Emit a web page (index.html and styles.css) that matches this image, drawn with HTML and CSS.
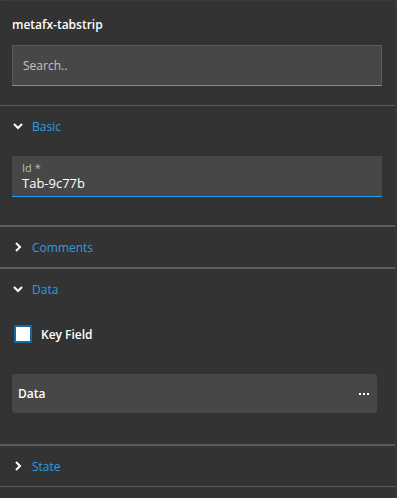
FILE: index.html
```html
<!DOCTYPE html>
<html lang="en">
    <head>
        <meta charset="UTF-8" />
        <title>metafx-tabstrip</title>
        <link rel="stylesheet" href="styles.css">
    </head>
    <body>
        <div class="panel">
            <div class="top">
                <h1 class="title">metafx-tabstrip</h1>
                <div class="search">
                    <input type="text" placeholder="Search.." />
                </div>
            </div>

            <div class="section">
                <div class="sectionHead">
                    <svg class="chevron" width="10" height="10" viewBox="0 0 10 10"><path d="M1 3 L5 7 L9 3" fill="none" stroke="#fff" stroke-width="2"/></svg>
                    <span>Basic</span>
                </div>
                <div class="sectionBody basicBody">
                    <div class="field">
                        <div class="fieldLabel">Id *</div>
                        <div class="fieldValue">Tab-9c77b</div>
                    </div>
                </div>
            </div>

            <div class="section">
                <div class="sectionHead">
                    <svg class="chevron" width="10" height="10" viewBox="0 0 10 10"><path d="M3 1 L7 5 L3 9" fill="none" stroke="#fff" stroke-width="2"/></svg>
                    <span>Comments</span>
                </div>
            </div>

            <div class="section">
                <div class="sectionHead">
                    <svg class="chevron" width="10" height="10" viewBox="0 0 10 10"><path d="M1 3 L5 7 L9 3" fill="none" stroke="#fff" stroke-width="2"/></svg>
                    <span>Data</span>
                </div>
                <div class="sectionBody dataBody">
                    <label class="check">
                        <span class="box"></span>
                        <span>Key Field</span>
                    </label>
                    <div class="dataBox">
                        <span>Data</span>
                        <svg width="10" height="4" viewBox="0 0 10 4"><rect x="0" y="1" width="2" height="2" fill="#fff"/><rect x="4" y="1" width="2" height="2" fill="#fff"/><rect x="8" y="1" width="2" height="2" fill="#fff"/></svg>
                    </div>
                </div>
            </div>

            <div class="section">
                <div class="sectionHead">
                    <svg class="chevron" width="10" height="10" viewBox="0 0 10 10"><path d="M3 1 L7 5 L3 9" fill="none" stroke="#fff" stroke-width="2"/></svg>
                    <span>State</span>
                </div>
            </div>
        </div>
    </body>
</html>
```

FILE: styles.css
```css
body {
    margin: 0;
    background-color: #333333;
    font-family: "Open Sans", "Noto Sans", sans-serif;
    font-size: 12px;
    color: #ffffff;
}
.panel {
    width: 396px;
    height: 498px;
    border-top: 1px dotted #444444;
    border-right: 1px dotted #444444;
    box-sizing: border-box;
}
.top {
    padding: 15px 13px 19px 12px;
}
.title {
    margin: 0;
    font-size: 12px;
    font-weight: 600;
    line-height: 18px;
}
.search {
    margin-top: 11px;
}
.search input {
    display: block;
    width: 370px;
    height: 41px;
    box-sizing: border-box;
    background-color: #474747;
    border: 1px solid #5a5a5a;
    border-bottom: 1px solid #45a6de;
    padding: 0 10px;
    font-family: inherit;
    font-size: 12px;
    color: #ffffff;
    outline: none;
}
.search input::placeholder {
    color: #c4c4c4;
}
.section {
    border-top: 1px solid #5c5c5c;
    border-bottom: 1px solid #5c5c5c;
}
.sectionHead {
    height: 40px;
    display: flex;
    align-items: center;
    padding-left: 13px;
    color: #2a9de6;
}
.chevron {
    margin-right: 9px;
}
.basicBody {
    padding: 10px 13px 28px 12px;
}
.field {
    height: 41px;
    box-sizing: border-box;
    background-color: #474747;
    border-bottom: 1px solid #1ea0ee;
    padding: 5px 10px 0;
}
.fieldLabel {
    font-size: 11px;
    color: #bdbdbd;
    line-height: 14px;
}
.fieldValue {
    font-size: 13px;
    font-weight: 500;
    line-height: 17px;
}
.dataBody {
    padding: 15px 18px 31px 12px;
}
.check {
    display: flex;
    align-items: center;
    font-weight: 600;
    height: 20px;
    padding-left: 2px;
}
.box {
    width: 18px;
    height: 18px;
    box-sizing: border-box;
    border: 2px solid #16689f;
    background-color: #ffffff;
    margin-right: 9px;
}
.dataBox {
    margin-top: 30px;
    height: 39px;
    display: flex;
    align-items: center;
    justify-content: space-between;
    padding: 0 8px 0 6px;
    background-color: #474747;
    border-radius: 3px;
    font-weight: 600;
}
```
